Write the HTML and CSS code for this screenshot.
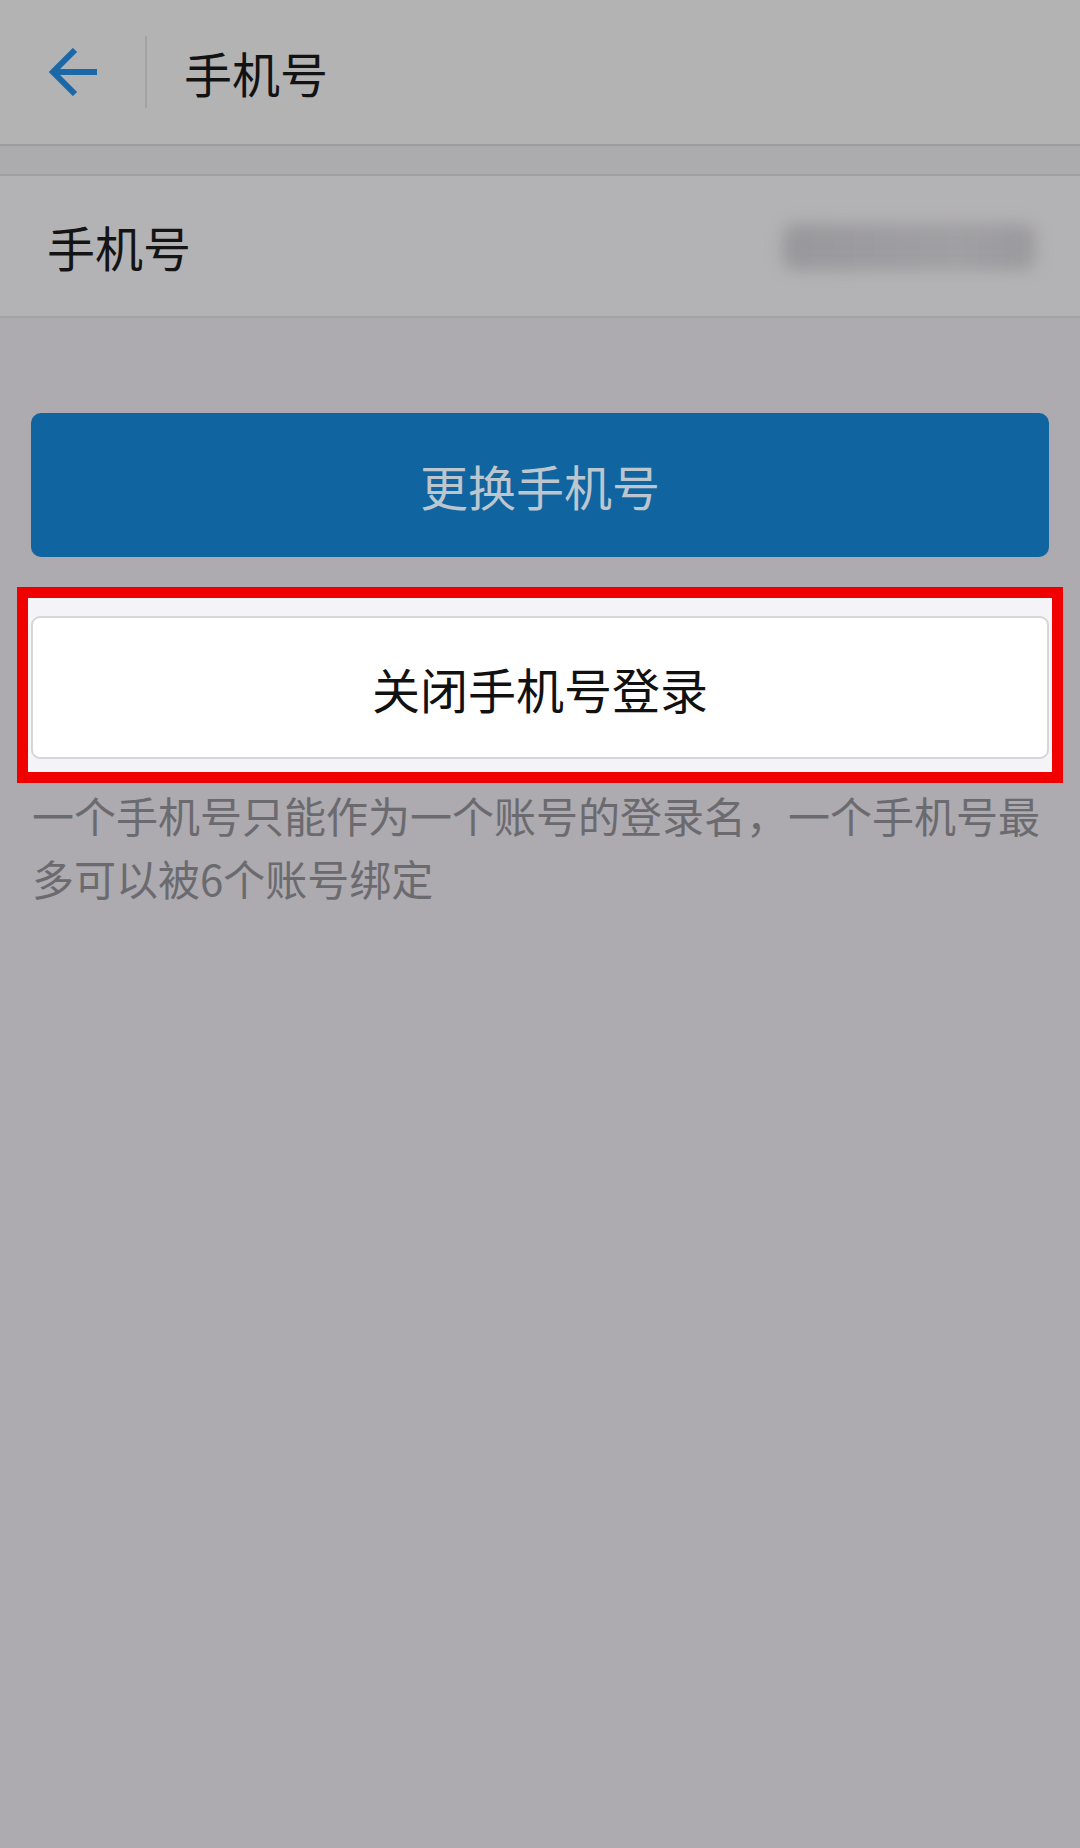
FILE: index.html
```html
<!DOCTYPE html>
<html lang="zh-CN">
<head>
<meta charset="utf-8">
<title>手机号</title>
<link rel="stylesheet" href="styles.css">
</head>
<body>
<div class="page">
  <header class="topbar">
    <svg class="back" viewBox="0 0 48 48" width="48" height="48" aria-hidden="true">
      <path d="M3 24 H48 M26 2 L4 24 L26 46" fill="none" stroke="#1a68a8" stroke-width="6"/>
    </svg>
    <span class="divider"></span>
    <h1 class="title">手机号</h1>
  </header>
  <div class="gap"></div>
  <div class="row">
    <span class="label">手机号</span>
    <span class="masked"></span>
  </div>
  <div class="actions">
    <button class="btn-primary">更换手机号</button>
    <div class="highlight">
      <button class="btn-plain">关闭手机号登录</button>
    </div>
    <p class="note">一个手机号只能作为一个账号的登录名，一个手机号最多可以被6个账号绑定</p>
  </div>
</div>
</body>
</html>
```

FILE: styles.css
```css
* { box-sizing: border-box; }
html, body { margin: 0; padding: 0; }
body {
  background: #adabb0;
  font-family: "Noto Sans CJK SC", "Noto Sans", sans-serif;
}
.page {
  width: 1080px;
  min-height: 1848px;
  background: #adabb0;
}
.topbar {
  height: 146px;
  background: #b3b3b3;
  border-bottom: 2px solid #9d9c9f;
  display: flex;
  align-items: center;
  padding-left: 49px;
}
.back { display: block; flex: none; }
.divider {
  width: 2px;
  height: 72px;
  background: #a2a2a2;
  margin-left: 48px;
}
.title {
  margin: 0 0 0 37px;
  font-size: 48px;
  font-weight: 400;
  color: #121212;
  line-height: 1;
}
.gap {
  height: 30px;
  background: #acabad;
  border-bottom: 2px solid #a0a0a3;
}
.row {
  height: 142px;
  background: #b3b2b4;
  border-bottom: 2px solid #a3a2a5;
  display: flex;
  align-items: center;
  justify-content: space-between;
  padding: 0 45px 0 47px;
}
.label {
  font-size: 48px;
  color: #141414;
  line-height: 1;
}
.masked {
  width: 252px;
  height: 46px;
  margin-top: 2px;
  background: linear-gradient(90deg, #98979b 0%, #9d9ca0 40%, #a09fa3 70%, #9a999d 100%);
  border-radius: 12px;
  filter: blur(8px);
}
.actions {
  padding: 95px 31px 0 31px;
  display: flex;
  flex-direction: column;
}
.btn-primary {
  height: 144px;
  border: none;
  border-radius: 10px;
  background: #1064a0;
  color: #bcc6cf;
  font-family: inherit;
  font-size: 48px;
  padding: 0;
}
.highlight {
  margin: 30px -14px 0 -14px;
  border: 11px solid #f10000;
  background: #f4f3f8;
  padding: 18px 3px 13px 3px;
}
.btn-plain {
  display: block;
  width: 100%;
  height: 143px;
  background: #ffffff;
  border: 2px solid #d6d6d8;
  border-radius: 9px;
  color: #111111;
  font-family: inherit;
  font-size: 48px;
  padding: 0;
}
.note {
  margin: 0 0 0 1px;
  font-size: 42px;
  line-height: 63px;
  color: #6b6a6f;
}
```
